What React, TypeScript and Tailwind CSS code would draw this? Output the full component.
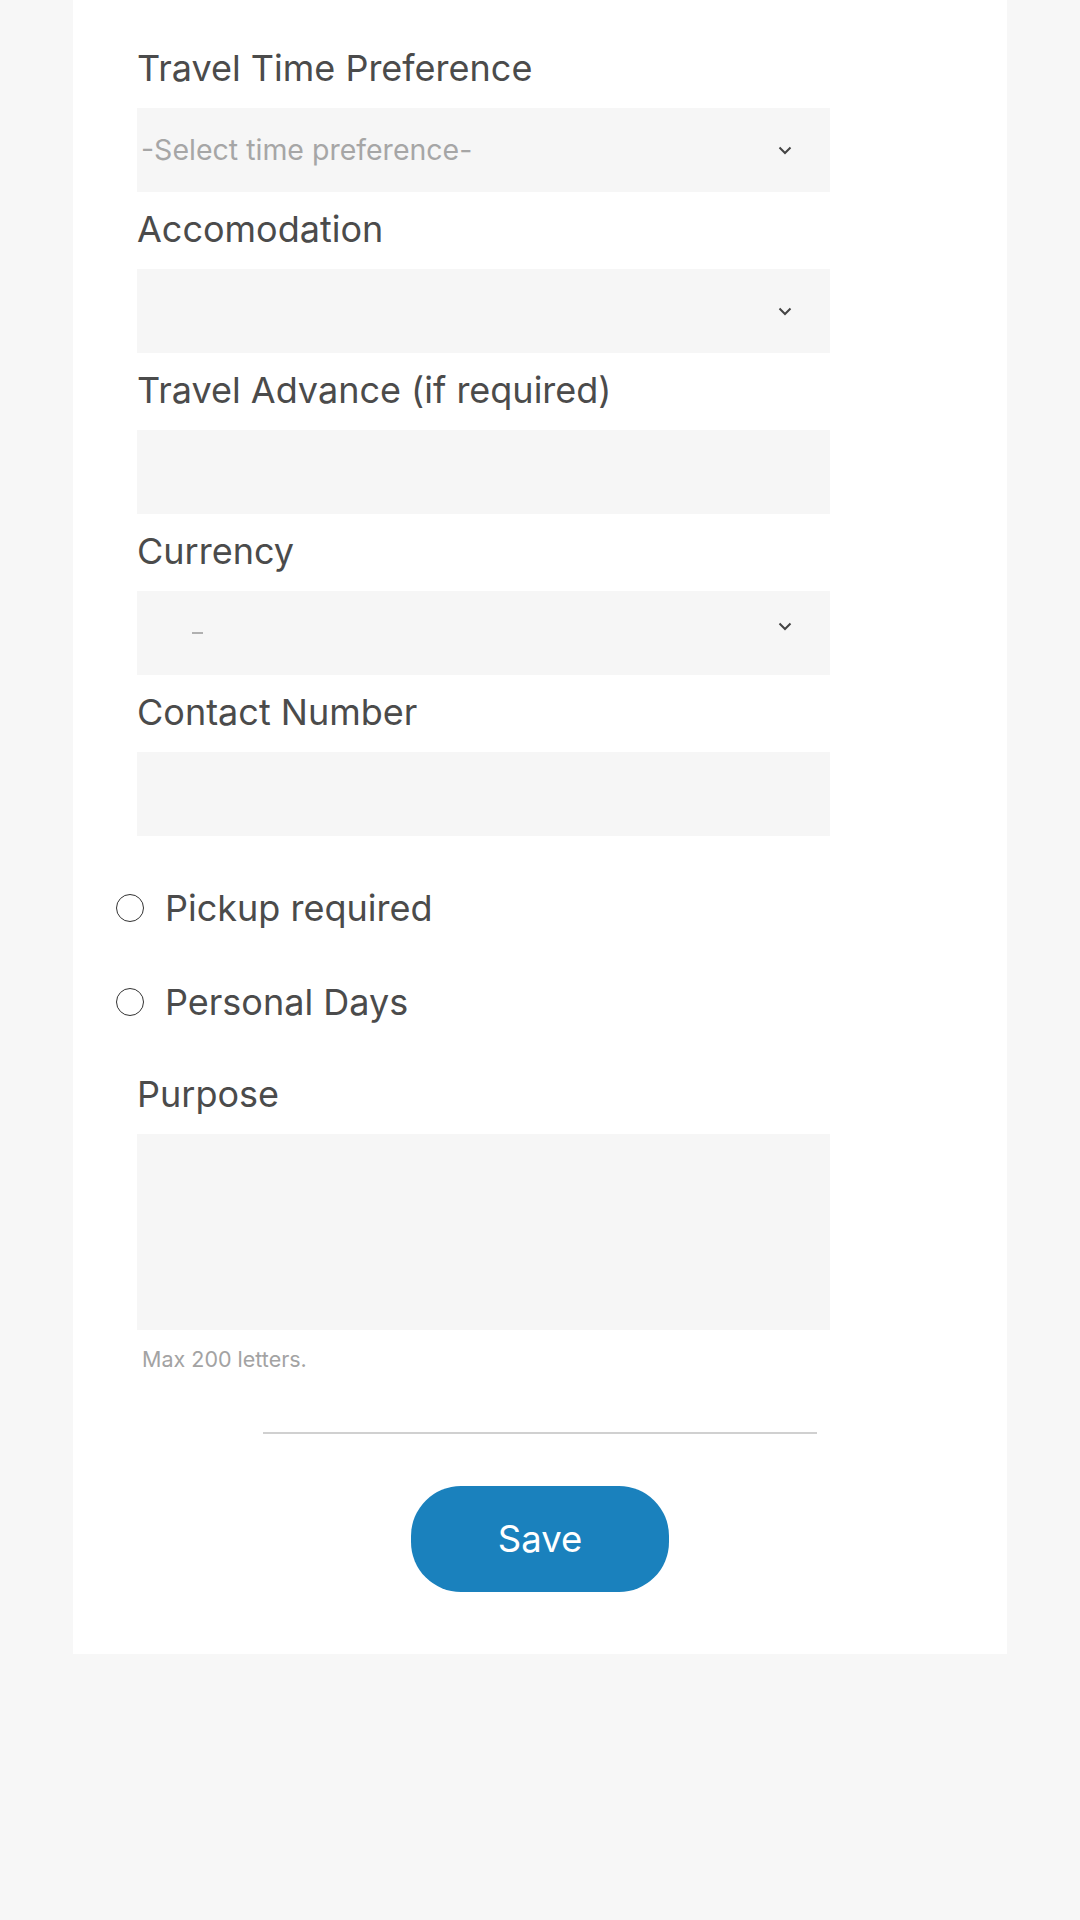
import React from "react";

const font = { fontFamily: "Inter, 'Noto Sans', sans-serif" };

const Chevron = ({ className = "" }: { className?: string }) => (
  <svg width="14" height="9" viewBox="0 0 14 9" className={className} fill="none">
    <path d="M1.5 1.5 L7 7 L12.5 1.5" stroke="#444" strokeWidth="2" />
  </svg>
);

const Label = ({ children, className = "" }: { children: React.ReactNode; className?: string }) => (
  <div className={`pt-[10px] pb-[12px] leading-[55px] text-[36px] text-[#4b4b4b] ${className}`}>{children}</div>
);

const SelectBox = ({ children, chevronClass = "" }: { children?: React.ReactNode; chevronClass?: string }) => (
  <div className="flex items-center justify-between h-[84px] bg-[#f6f6f6] pl-[4px] pr-[38px]">
    <div className="text-[28.5px] text-[#a6a6a6]">{children}</div>
    <Chevron className={chevronClass} />
  </div>
);

const TextBox = () => (
  <input type="text" className="block w-full h-[84px] bg-[#f6f6f6] outline-none px-[4px]" />
);

const Radio = ({ label }: { label: string }) => (
  <div className="flex items-center h-[94px] -ml-[21px]">
    <span className="w-[28px] h-[28px] rounded-full border border-[#333] bg-white" />
    <span className="ml-[21px] text-[36px] text-[#4b4b4b]">{label}</span>
  </div>
);

export default function App() {
  return (
    <div className="min-h-[1920px] bg-[#f7f7f7]" style={font}>
      <div className="mx-[73px] bg-white pt-[31px] pb-[62px]">
        <div className="px-[64px] w-[821px]">
          <Label>Travel Time Preference</Label>
          <SelectBox>-Select time preference-</SelectBox>

          <Label>Accomodation</Label>
          <SelectBox />

          <Label>Travel Advance (if required)</Label>
          <TextBox />

          <Label>Currency</Label>
          <SelectBox chevronClass="-mt-[14px]">
            <span className="block w-[11px] h-[2px] bg-[#b0b0b0] ml-[51px]" />
          </SelectBox>

          <Label>Contact Number</Label>
          <TextBox />

          <div className="mt-[25px]">
            <Radio label="Pickup required" />
            <Radio label="Personal Days" />
          </div>

          <Label className="mt-[8px]">Purpose</Label>
          <textarea className="block w-full h-[196px] bg-[#f6f6f6] resize-none outline-none" />
          <div className="mt-[14px] pl-[5px] text-[21.5px] leading-[30px] text-[#a3a3a3]">Max 200 letters.</div>
        </div>

        <div className="mt-[58px] mx-auto w-[554px] h-[2px] bg-[#d0d0d0]" />

        <div className="mt-[52px] flex justify-center">
          <button className="w-[258px] h-[106px] rounded-[50px] bg-[#1a81bd] text-white text-[36.5px]">Save</button>
        </div>
      </div>
    </div>
  );
}
